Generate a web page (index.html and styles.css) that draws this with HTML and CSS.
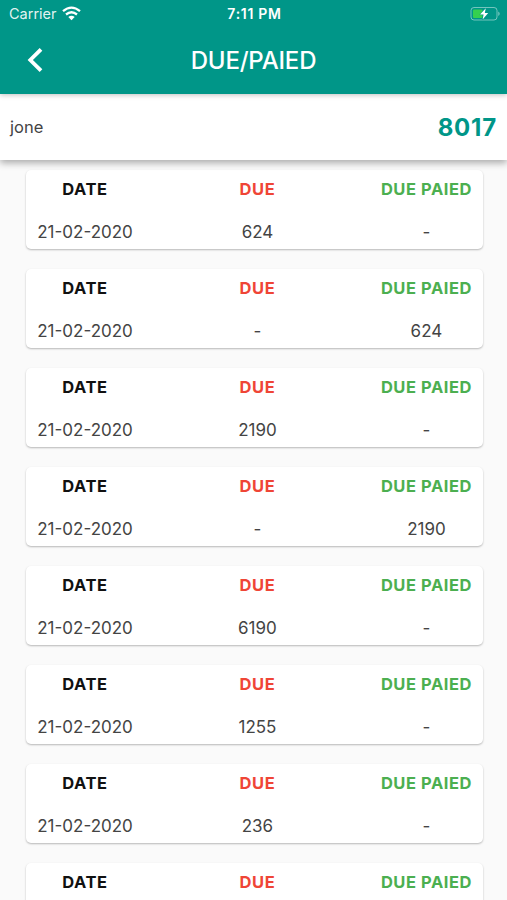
FILE: index.html
```html
<!DOCTYPE html>
<html lang="en">
<head>
<meta charset="utf-8">
<title>Due/Paied</title>
<link rel="stylesheet" href="styles.css">
</head>
<body>
<header class="top">
  <div class="status">
    <div class="carrier"><span>Carrier</span>
      <svg width="19" height="15" viewBox="0 0 19 15" fill="none" stroke="#fff" stroke-width="2.3"><path d="M1 5.2Q9.5-2 18 5.2M4 8.5Q9.5 4 15 8.5"/><path d="M6.3 11Q9.5 8.4 12.7 11L9.5 14.2Z" fill="#fff" stroke="none"/></svg>
    </div>
    <div class="time">7:11 PM</div>
    <div class="battery">
      <svg width="30" height="16" viewBox="0 0 30 16"><rect x="1" y="1.5" width="26" height="12.5" rx="3" fill="none" stroke="#fff" stroke-opacity=".45"/><rect x="3" y="3.5" width="9.5" height="8.5" rx="1" fill="#35d04f"/><path d="M28.3 5.5Q31 7.7 28.3 10Z" fill="#fff" opacity=".5"/><path d="M15.8 2.3L10 8.6H13.6L12.6 13.6L18.2 7H14.8Z" fill="#fff" stroke="#009688" stroke-width="1" paint-order="stroke"/></svg>
    </div>
  </div>
  <div class="bar">
    <svg class="back" width="18" height="26" viewBox="0 0 18 26" fill="none" stroke="#fff" stroke-width="3.8"><path d="M15 2.4L4.3 13L15 23.6"/></svg>
    <h1>DUE/PAIED</h1>
  </div>
</header>
<section class="summary"><span class="name">jone</span><span class="total">8017</span></section>
<main class="list" id="list"></main>
<script src="app.js"></script>
</body>
</html>
```
FILE: styles.css
```css
* { box-sizing: border-box; }
body { margin: 0; height: 900px; overflow: hidden; background: #fafafa; font-family: Inter, "Liberation Sans", sans-serif; color: #444; display: flex; flex-direction: column; }
.top { height: 94px; flex: none; background: #009688; color: #fff; box-shadow: 0 1px 5px rgba(0,0,0,.25); position: relative; z-index: 2; }
.status { height: 27px; padding: 0 7px 0 9px; display: grid; grid-template-columns: 1fr auto 1fr; align-items: center; }
.carrier { display: flex; align-items: center; gap: 5px; font-size: 14.5px; color: rgba(255,255,255,.9); }
.carrier svg { margin-top: -1px; }
.time { font-size: 14px; font-weight: 600; letter-spacing: .7px; }
.battery { display: flex; justify-content: flex-end; }
.bar { height: 66px; display: grid; grid-template-columns: 70px 1fr 70px; align-items: center; }
.back { margin-left: 26px; }
h1 { margin: 0; font-size: 24px; font-weight: 500; text-align: center; letter-spacing: -.2px; }
.summary { height: 66px; flex: none; background: #fff; display: flex; align-items: center; justify-content: space-between; padding: 0 10px 0 10px; box-shadow: 0 3px 7px rgba(0,0,0,.32); position: relative; z-index: 1; }
.name { font-size: 16.5px; }
.total { font-size: 24px; font-weight: 700; letter-spacing: .8px; color: #009688; }
.list { padding: 10px 24px 0 26px; display: flex; flex-direction: column; gap: 20px; }
.card { height: 79px; flex: none; background: #fff; border-radius: 5px; box-shadow: 0 1px 2px rgba(0,0,0,.27); display: flex; justify-content: space-between; }
.col { display: flex; flex-direction: column; align-items: center; font-size: 17px; line-height: 22px; padding: 8px 11px 0; gap: 21px; }
.date { width: 118px; padding: 8px 0 0; }
.paid { padding-left: 10px; }
.col b { font-size: 16.5px; font-weight: 700; letter-spacing: .55px; }
.date b { color: #111; }
.due b { color: #ef4536; }
.paid b { color: #4caf50; }
```
FILE: app.js
```js
const rows = [["624", "-"], ["-", "624"], ["2190", "-"], ["-", "2190"], ["6190", "-"], ["1255", "-"], ["236", "-"], null];
const value = text => `<span>${text}</span>`;
document.getElementById("list").innerHTML = rows.map(row => `
  <article class="card">
    <div class="col date"><b>DATE</b>${row ? value("21-02-2020") : ""}</div>
    <div class="col due"><b>DUE</b>${row ? value(row[0]) : ""}</div>
    <div class="col paid"><b>DUE PAIED</b>${row ? value(row[1]) : ""}</div>
  </article>`).join("");
```
